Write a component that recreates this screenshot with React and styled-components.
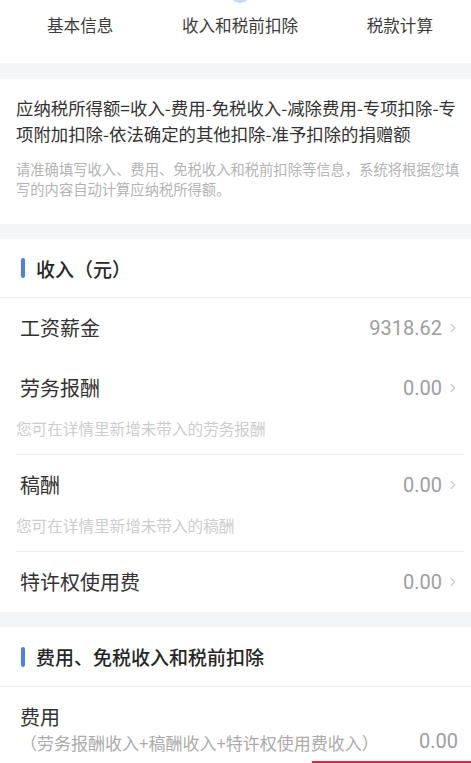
import React from 'react'
import styled, { createGlobalStyle, css } from 'styled-components'

const GlobalStyle = createGlobalStyle`
  body {
    margin: 0;
    background: #fff;
    font-family: "Noto Sans CJK SC", "Noto Sans", sans-serif;
    color: #333;
    overflow: hidden;
  }
`

const Page = styled.div`
  margin-top: -18px;
  padding-bottom: 80px;
`

const Steps = styled.div`
  display: flex;
  justify-content: space-between;
  padding: 0 38px 26px 47px;
`

const Step = styled.div`
  display: flex;
  flex-direction: column;
  align-items: center;
`

const DotSlot = styled.div`
  height: 20px;
  display: flex;
  align-items: center;
  justify-content: center;
`

const Dot = styled.span`
  width: 10px;
  height: 10px;
  border-radius: 50%;
  background: #d8d8d8;
  ${props => props.$active && css`
    width: 14px;
    height: 14px;
    background: #4a7ff0;
    box-shadow: 0 0 0 4px #c9daf8;
  `}
`

const StepLabel = styled.div`
  margin-top: 11px;
  font-size: 16.6px;
  line-height: 24px;
  color: #3c3c3c;
  white-space: nowrap;
`

const Band = styled.div`
  height: ${props => props.$h || 16}px;
  background: #f4f5f7;
`

const FormulaCard = styled.div`
  padding: 16px 8px 25px 16px;
`

const Formula = styled.div`
  font-size: 17.4px;
  line-height: 26px;
  color: #333;
`

const FormulaHint = styled.div`
  margin-top: 12px;
  font-size: 14.3px;
  line-height: 20px;
  color: #b4b4b4;
`

const SectionHead = styled.div`
  height: ${props => props.$h || 58}px;
  display: flex;
  align-items: center;
  gap: 11px;
  padding-left: 21px;
  border-bottom: 1px solid #ececec;
  font-size: 19px;
  font-weight: 500;
  color: #262626;
`

const Marker = styled.span`
  width: 4px;
  height: 20px;
  border-radius: 2px;
  background: #4a7ff0;
`

const Row = styled.div`
  margin: 0 7px 0 16px;
  padding-right: 8px;
  ${props => props.$divided && css`
    border-bottom: 1px solid #ececec;
  `}
`

const RowMain = styled.div`
  height: 60px;
  display: flex;
  align-items: center;
  justify-content: space-between;
`

const Label = styled.div`
  margin-left: 4px;
  font-size: 20px;
  line-height: 28px;
  color: #333;
`

const ValueWrap = styled.div`
  display: flex;
  align-items: center;
  gap: 8px;
`

const Value = styled.span`
  font-family: Roboto, "Noto Sans", sans-serif;
  font-size: 20px;
  color: #9e9e9e;
`

const RowHint = styled.div`
  padding-bottom: 16px;
  font-size: 15.6px;
  line-height: 20px;
  color: #cdcdcd;
`

const FeeRow = styled.div`
  margin: 0 7px 0 16px;
  padding: 16px 6px 0 0;
  display: flex;
  align-items: center;
  gap: 8px;
`

const FeeText = styled.div`
  flex: 1;
  min-width: 0;
`

const FeeSub = styled.div`
  margin-left: 4px;
  font-size: 17px;
  line-height: 24px;
  color: #ababab;
`

const Footer = styled.div`
  position: fixed;
  left: 0;
  right: 0;
  bottom: -58px;
  height: 60px;
  display: flex;
  justify-content: flex-end;
  background: #fff;
`

const NextButton = styled.button`
  width: 159px;
  border: none;
  background: #d6283e;
`

const Chevron = () => (
  <svg width="6" height="10" viewBox="0 0 6 10">
    <path d="M1.2 1.5l3.5 3.5-3.5 3.5" fill="none" stroke="#cacaca" strokeWidth="1.2" strokeLinecap="round" strokeLinejoin="round" />
  </svg>
)

const steps = ['基本信息', '收入和税前扣除', '税款计算']

const incomes = [
  { name: '工资薪金', value: '9318.62' },
  { name: '劳务报酬', value: '0.00', hint: '您可在详情里新增未带入的劳务报酬', divided: true },
  { name: '稿酬', value: '0.00', hint: '您可在详情里新增未带入的稿酬', divided: true },
  { name: '特许权使用费', value: '0.00' }
]

const App = () => (
  <Page>
    <GlobalStyle />
    <Steps>
      {steps.map((s, i) => (
        <Step key={s}>
          <DotSlot><Dot $active={i === 1} /></DotSlot>
          <StepLabel>{s}</StepLabel>
        </Step>
      ))}
    </Steps>
    <Band />
    <FormulaCard>
      <Formula>应纳税所得额=收入-费用-免税收入-减除费用-专项扣除-专项附加扣除-依法确定的其他扣除-准予扣除的捐赠额</Formula>
      <FormulaHint>请准确填写收入、费用、免税收入和税前扣除等信息，系统将根据您填写的内容自动计算应纳税所得额。</FormulaHint>
    </FormulaCard>
    <Band $h={15} />
    <SectionHead><Marker />收入（元）</SectionHead>
    {incomes.map(item => (
      <Row key={item.name} $divided={item.divided}>
        <RowMain>
          <Label>{item.name}</Label>
          <ValueWrap>
            <Value>{item.value}</Value>
            <Chevron />
          </ValueWrap>
        </RowMain>
        {item.hint && <RowHint>{item.hint}</RowHint>}
      </Row>
    ))}
    <Band $h={15} />
    <SectionHead $h={59}><Marker />费用、免税收入和税前扣除</SectionHead>
    <FeeRow>
      <FeeText>
        <Label>费用</Label>
        <FeeSub>（劳务报酬收入+稿酬收入+特许权使用费收入）×20%</FeeSub>
      </FeeText>
      <Value>0.00</Value>
    </FeeRow>
    <Footer>
      <NextButton aria-label="下一步" />
    </Footer>
  </Page>
)

export default App
